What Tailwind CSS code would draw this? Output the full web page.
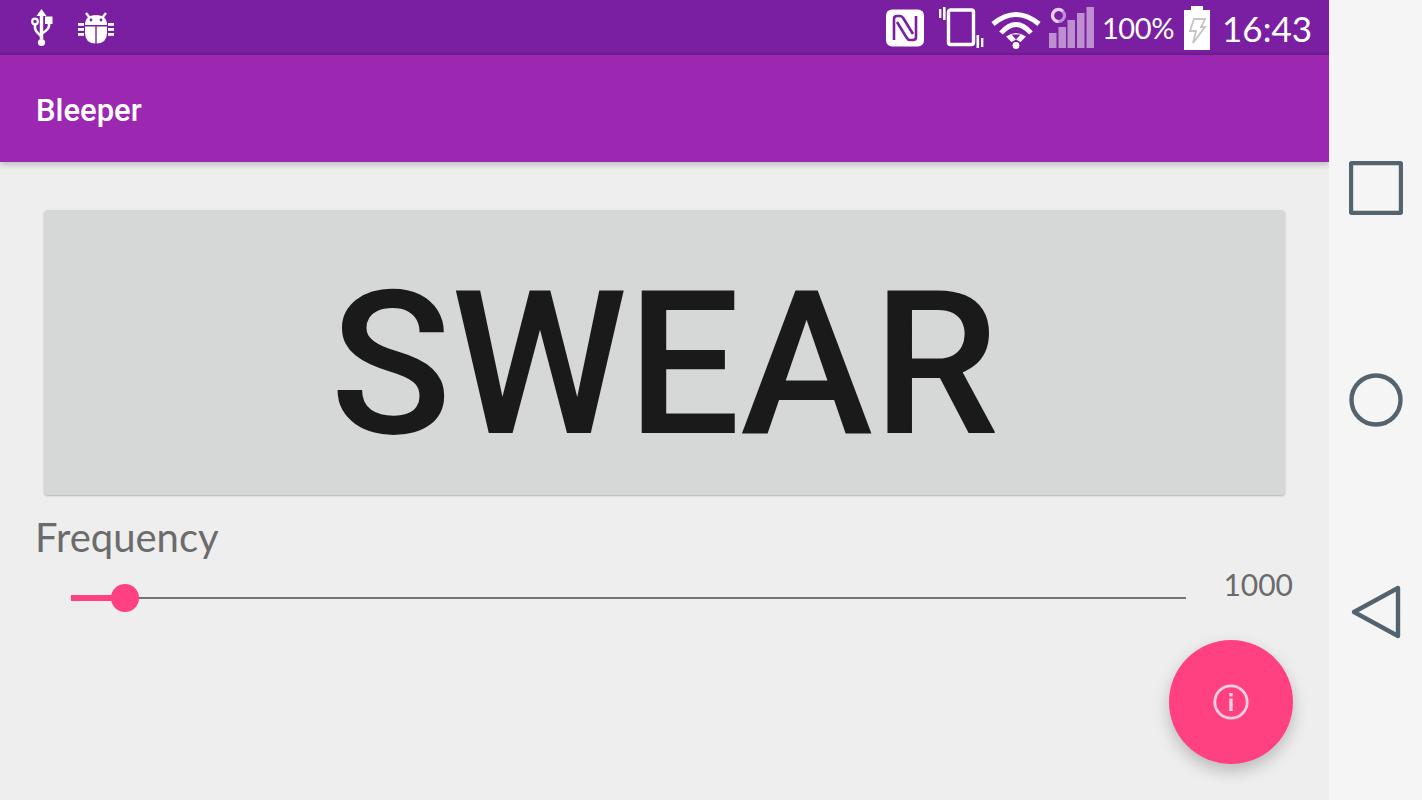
<!DOCTYPE html>
<html>
<head>
<meta charset="utf-8">
<script src="https://cdn.jsdelivr.net/npm/@tailwindcss/browser@4"></script>
</head>
<body class="m-0 overflow-hidden">
<div class="flex w-[1422px] h-[800px] bg-[#eeeeee] font-['Roboto',sans-serif]">
  <div class="relative flex flex-col w-[1329px] h-full overflow-hidden">
    <div class="flex items-center justify-between h-[55px] bg-[#7b1fa2] pl-[30px] pr-[17px] text-white shadow-[inset_0_-2px_2px_rgba(0,0,0,0.1)]">
      <div class="flex items-center gap-[24px]">
        <svg class="w-[24px] h-[38px]" viewBox="0 0 24 38" fill="white" stroke="none">
          <path d="M11.5 0 L16.5 7 H13.2 V30 H9.8 V7 H6.5 Z"/>
          <circle cx="11.5" cy="33.5" r="3.6"/>
          <path d="M5 15 V19 Q5 22 11 27" fill="none" stroke="white" stroke-width="2.6"/>
          <circle cx="5" cy="12.5" r="2.8" fill="#7b1fa2" stroke="white" stroke-width="2.2"/>
          <path d="M19 14 V17 Q19 20 11.5 25" fill="none" stroke="white" stroke-width="2.6"/>
          <rect x="15" y="7.5" width="7.5" height="7.5"/>
        </svg>
        <svg class="w-[36px] h-[32px]" viewBox="0 0 36 32" fill="white">
          <path d="M8 1 L12 6 M28 1 L24 6" stroke="white" stroke-width="2.4"/>
          <path d="M7 13 Q7 3 18 3 Q29 3 29 13 Z"/>
          <circle cx="13" cy="8" r="1.4" fill="#7b1fa2"/>
          <circle cx="23" cy="8" r="1.4" fill="#7b1fa2"/>
          <path d="M7 14.5 H17.3 V31.5 Q7 31 7 21 Z"/>
          <path d="M29 14.5 H18.7 V31.5 Q29 31 29 21 Z"/>
          <rect x="0" y="11" width="6" height="2.8"/><rect x="0" y="16" width="6" height="2.8"/><rect x="0" y="21" width="6" height="2.8"/>
          <rect x="30" y="11" width="6" height="2.8"/><rect x="30" y="16" width="6" height="2.8"/><rect x="30" y="21" width="6" height="2.8"/>
        </svg>
      </div>
      <div class="flex items-center font-['Lato',sans-serif]">
        <svg class="w-[38px] h-[38px] mr-[14px]" viewBox="0 0 38 38">
          <rect x="0" y="0.5" width="38" height="37" rx="6" fill="white"/>
          <path d="M8 31 V10 Q8 7 11 7 H14 Q16 7 17.5 9.5 L27 25" fill="none" stroke="#7b1fa2" stroke-width="2.6"/>
          <path d="M30 7 V28 Q30 31 27 31 H24 Q22 31 20.5 28.5 L11 13" fill="none" stroke="#7b1fa2" stroke-width="2.6"/>
        </svg>
        <svg class="w-[46px] h-[42px] mr-[7px]" viewBox="0 0 46 42" fill="none" stroke="white">
          <rect x="10.5" y="3" width="25" height="34.5" rx="2" stroke-width="3.4"/>
          <rect x="1" y="2" width="2.4" height="9" fill="white" stroke="none"/>
          <rect x="5" y="0" width="2.6" height="13" fill="white" stroke="none"/>
          <rect x="38.5" y="28" width="2.6" height="13" fill="white" stroke="none"/>
          <rect x="43" y="31" width="2.4" height="9" fill="white" stroke="none"/>
        </svg>
        <svg class="w-[50px] h-[38px] mr-[8px] mt-[4px]" viewBox="0 0 50 38" fill="none" stroke="white">
          <path d="M2 13 Q25 -6 48 13" stroke-width="5"/>
          <path d="M10 22 Q25 5 40 22" stroke-width="4.8"/>
          <path d="M15 25.5 Q25 18.5 35 25.5 L29.5 31 L25 28.5 L20.5 31 Z" fill="white" stroke="none"/>
          <path d="M20.5 23.5 H29.5 L25 28.5 Z" fill="#7b1fa2" stroke="none"/>
          <circle cx="25" cy="34.5" r="3.4" fill="white" stroke="none"/>
        </svg>
        <svg class="w-[45px] h-[44px] mr-[8px]" viewBox="0 0 45 44" fill="white">
          <circle cx="9.5" cy="9.5" r="6" fill="none" stroke="white" stroke-opacity="0.5" stroke-width="3.2"/>
          <path d="M13.7 5.2 A6 6 0 1 0 9.5 15.5" fill="none" stroke="white" stroke-opacity="0.6" stroke-width="3.2"/>
          <rect x="0" y="27" width="7.5" height="15" opacity="0.5"/>
          <rect x="9.5" y="21" width="7.5" height="21" opacity="0.5"/>
          <rect x="18.5" y="14" width="7.5" height="28" opacity="0.5"/>
          <rect x="28" y="7" width="7.5" height="35" opacity="0.5"/>
          <rect x="37.5" y="1" width="7.5" height="41" opacity="0.5"/>
        </svg>
        <span class="text-[29px] leading-[54px] tracking-[-0.4px] mr-[9px]">100%</span>
        <svg class="w-[28px] h-[44px] mr-[11px]" viewBox="0 0 28 44">
          <path d="M8 0 H20 V4 H27 V44 H1 V4 H8 Z" fill="white"/>
          <path d="M11 13 H22 L18 21 H22 L10 37 L13 25 H7 Z" fill="none" stroke="#c4c4c4" stroke-width="1.8"/>
        </svg>
        <span class="text-[35px] leading-[54px]">16:43</span>
      </div>
    </div>

    <div class="flex items-center h-[107px] bg-[#9c27b0] pl-[36px] pt-[5px] shadow-[0_3px_6px_rgba(0,0,0,0.2)] z-10">
      <span class="text-white text-[31px] font-medium">Bleeper</span>
    </div>

    <div class="flex flex-col flex-1 pt-[48px] pl-[44px] pr-[44px]">
      <div class="flex items-center justify-center h-[285px] rounded-[4px] bg-[#d6d8d7] shadow-[0_1px_2px_rgba(0,0,0,0.25)]">
        <span class="text-[200px] leading-none text-[#1a1a1a] font-medium mt-[24px]">SWEAR</span>
      </div>
      <div class="-ml-[9px] mt-[18px] font-['Lato',sans-serif] text-[40px] leading-[48px] text-[#6b6b6b]">Frequency</div>
      <div class="flex items-center -mr-[8px] mt-[5px]">
        <div class="relative ml-[27px] w-[1115px] h-[2px] bg-[#757575] mt-[27px]">
          <div class="absolute left-0 -top-[2px] w-[54px] h-[6px] bg-[#ff4081]"></div>
          <div class="absolute left-[40px] -top-[13px] w-[28px] h-[28px] rounded-full bg-[#ff4081]"></div>
        </div>
        <span class="ml-auto font-['Lato',sans-serif] text-[30px] leading-[36px] text-[#6b6b6b]">1000</span>
      </div>
    </div>

    <div class="absolute left-[1169px] top-[640px] flex items-center justify-center w-[124px] h-[124px] rounded-full bg-[#ff4081] shadow-[0_7px_16px_rgba(0,0,0,0.22)]">
      <svg class="w-[36px] h-[36px]" viewBox="0 0 36 36" fill="none" stroke="#ffcfe0">
        <circle cx="18" cy="18" r="16.2" stroke-width="2.8"/>
        <rect x="16.3" y="14.5" width="3.4" height="12.5" fill="#ffcfe0" stroke="none"/>
        <rect x="16.3" y="9" width="3.4" height="3.4" fill="#ffcfe0" stroke="none"/>
      </svg>
    </div>
  </div>

  <div class="flex flex-col items-center w-[93px] h-full bg-[#f5f5f5]">
    <svg class="mt-[161px] w-[54px] h-[54px]" viewBox="0 0 54 54" fill="none">
      <rect x="2" y="2" width="50" height="50" rx="1.5" stroke="#54646f" stroke-width="4.4"/>
    </svg>
    <svg class="mt-[158px] w-[54px] h-[54px]" viewBox="0 0 54 54" fill="none">
      <circle cx="27" cy="27" r="24.5" stroke="#54646f" stroke-width="4.4"/>
    </svg>
    <svg class="mt-[158px] w-[54px] h-[54px]" viewBox="0 0 54 54" fill="none">
      <path d="M5 27 L49 3 V51 Z" stroke="#54646f" stroke-width="4.4" stroke-linejoin="round"/>
    </svg>
  </div>
</div>
</body>
</html>
